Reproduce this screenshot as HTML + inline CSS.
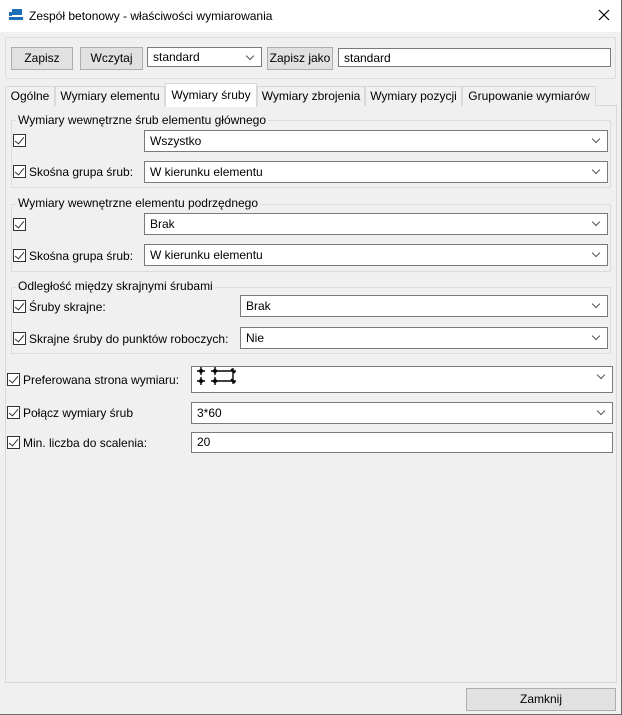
<!DOCTYPE html>
<html><head><meta charset="utf-8"><style>
*{box-sizing:border-box;margin:0;padding:0}
body{width:622px;height:715px;background:#f0f0f0;font-family:"Segoe UI","Liberation Sans",sans-serif;font-size:12px;color:#000;position:relative;overflow:hidden}
.a{position:absolute}
.win{left:0;top:0;width:622px;height:715px;border-right:1px solid #6b6b6b;border-bottom:1px solid #6b6b6b}
.title{left:0;top:0;width:621px;height:32px;background:#fff}
.btn{position:absolute;background:#e1e1e1;border:1px solid #adadad;text-align:center;line-height:20px}
.box{position:absolute;background:#fff;border:1px solid #7a7a7a;padding-left:5px;line-height:18px}
.combo::after{content:"";position:absolute;right:8px;top:5px;width:5px;height:5px;border-right:1px solid #555;border-bottom:1px solid #555;transform:rotate(45deg)}
.grp{position:absolute;border:1px solid #dcdcdc;border-radius:2px}
.gt{position:absolute;background:#f0f0f0;padding:0 2px;line-height:14px}
.cb{position:absolute;width:13px;height:13px;border:1px solid #333;background:#fff}
.cb::after{content:"";position:absolute;left:3px;top:0px;width:4px;height:8px;border-right:1.3px solid #333;border-bottom:1.3px solid #333;transform:rotate(40deg)}
.lbl{position:absolute;line-height:14px;white-space:nowrap}
.tab{position:absolute;top:86px;height:20px;border:1px solid #d9d9d9;border-bottom:none;background:#f0f0f0;text-align:center;line-height:18px;white-space:nowrap}
</style></head><body>
<div class="a win"></div>
<div class="a title"></div>
<svg class="a" style="left:8px;top:8px" width="16" height="14"><rect x="4" y="1" width="10" height="6" fill="#1c6fb4"/><rect x="1" y="9" width="14" height="3" fill="#1c6fb4"/><rect x="1" y="4" width="3" height="4" fill="#1c6fb4"/></svg>
<div class="lbl" style="left:29px;top:9px">Zespół betonowy - właściwości wymiarowania</div>
<svg class="a" style="left:598px;top:9px" width="12" height="12"><path d="M1 1L11 11M11 1L1 11" stroke="#000" stroke-width="1.2"/></svg>

<div class="grp" style="left:5px;top:37px;width:611px;height:42px;border-color:#dcdcdc"></div>
<div class="btn" style="left:11px;top:47px;width:62px;height:23px">Zapisz</div>
<div class="btn" style="left:80px;top:47px;width:63px;height:23px">Wczytaj</div>
<div class="box combo" style="left:147px;top:47px;width:115px;height:20px">standard</div>
<div class="btn" style="left:267px;top:47px;width:66px;height:23px;line-height:20px">Zapisz jako</div>
<div class="box" style="left:338px;top:48px;width:273px;height:19px">standard</div>

<div class="a" style="left:5px;top:105px;width:612px;height:578px;border:1px solid #d9d9d9;background:#f0f0f0"></div>
<div class="tab" style="left:5px;width:50px">Ogólne</div>
<div class="tab" style="left:55px;width:110px">Wymiary elementu</div>
<div class="tab" style="left:257px;width:108px">Wymiary zbrojenia</div>
<div class="tab" style="left:365px;width:97px">Wymiary pozycji</div>
<div class="tab" style="left:462px;width:134px">Grupowanie wymiarów</div>
<div class="tab" style="left:165px;top:83px;width:92px;height:24px;background:#fff;border-color:#d9d9d9;line-height:22px">Wymiary śruby</div>

<div class="grp" style="left:11px;top:120px;width:600px;height:68px"></div>
<div class="gt" style="left:16px;top:113px">Wymiary wewnętrzne śrub elementu głównego</div>
<div class="cb" style="left:13px;top:134px"></div>
<div class="box combo" style="left:144px;top:130px;width:464px;height:22px;line-height:20px">Wszystko</div>
<div class="cb" style="left:13px;top:165px"></div>
<div class="lbl" style="left:29px;top:165px">Skośna grupa śrub:</div>
<div class="box combo" style="left:144px;top:161px;width:464px;height:22px;line-height:20px">W kierunku elementu</div>

<div class="grp" style="left:11px;top:204px;width:600px;height:68px"></div>
<div class="gt" style="left:16px;top:196px">Wymiary wewnętrzne elementu podrzędnego</div>
<div class="cb" style="left:13px;top:218px"></div>
<div class="box combo" style="left:144px;top:213px;width:464px;height:22px;line-height:20px">Brak</div>
<div class="cb" style="left:13px;top:249px"></div>
<div class="lbl" style="left:29px;top:249px">Skośna grupa śrub:</div>
<div class="box combo" style="left:144px;top:244px;width:464px;height:22px;line-height:20px">W kierunku elementu</div>

<div class="grp" style="left:11px;top:287px;width:600px;height:67px"></div>
<div class="gt" style="left:16px;top:279px">Odległość między skrajnymi śrubami</div>
<div class="cb" style="left:13px;top:300px"></div>
<div class="lbl" style="left:29px;top:300px">Śruby skrajne:</div>
<div class="box combo" style="left:240px;top:295px;width:368px;height:22px;line-height:20px">Brak</div>
<div class="cb" style="left:13px;top:332px"></div>
<div class="lbl" style="left:29px;top:332px">Skrajne śruby do punktów roboczych:</div>
<div class="box combo" style="left:240px;top:327px;width:368px;height:22px;line-height:20px">Nie</div>

<div class="cb" style="left:7px;top:373px"></div>
<div class="lbl" style="left:23px;top:373px">Preferowana strona wymiaru:</div>
<div class="box combo" style="left:191px;top:366px;width:422px;height:27px"></div>
<svg class="a" style="left:194px;top:365px" width="50" height="22"><g stroke="#000" stroke-width="1.4" fill="none"><path d="M7 2v8M3 6h8M7 12v8M3 16h8M21 2v8M17 6h8M21 12v8M17 16h8M24 6h18M24 16h18M39 3v16M37 4l4 4M37 14l4 4"/></g><g fill="#000"><circle cx="7" cy="6" r="2"/><circle cx="7" cy="16" r="2"/><circle cx="21" cy="6" r="2"/><circle cx="21" cy="16" r="2"/></g></svg>

<div class="cb" style="left:7px;top:406px"></div>
<div class="lbl" style="left:23px;top:406px">Połącz wymiary śrub</div>
<div class="box combo" style="left:191px;top:402px;width:422px;height:22px;line-height:20px">3*60</div>
<div class="cb" style="left:7px;top:436px"></div>
<div class="lbl" style="left:23px;top:436px">Min. liczba do scalenia:</div>
<div class="box" style="left:191px;top:432px;width:422px;height:21px">20</div>

<div class="btn" style="left:466px;top:688px;width:150px;height:23px">Zamknij</div>
</body></html>
